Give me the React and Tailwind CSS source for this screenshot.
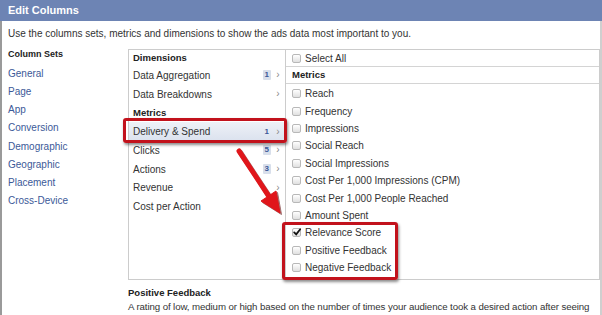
import React from 'react';

const columnSets = ['General', 'Page', 'App', 'Conversion', 'Demographic', 'Geographic', 'Placement', 'Cross-Device'];

const middleRows = [
    { label: 'Data Aggregation', badge: '1', arrow: true },
    { label: 'Data Breakdowns', arrow: true },
    { label: 'Metrics', heading: true },
    { label: 'Delivery & Spend', badge: '1', arrow: true, active: true },
    { label: 'Clicks', badge: '5', arrow: true },
    { label: 'Actions', badge: '3', arrow: true },
    { label: 'Revenue', arrow: true },
    { label: 'Cost per Action' },
];

const metrics = [
    { label: 'Reach' },
    { label: 'Frequency' },
    { label: 'Impressions' },
    { label: 'Social Reach' },
    { label: 'Social Impressions' },
    { label: 'Cost Per 1,000 Impressions (CPM)' },
    { label: 'Cost Per 1,000 People Reached' },
    { label: 'Amount Spent' },
    { label: 'Relevance Score', checked: true },
    { label: 'Positive Feedback' },
    { label: 'Negative Feedback' },
];

const Checkbox = ({ checked }) => (
    <span className="relative w-[9px] h-[9px] shrink-0 rounded-[2px] border border-[#b8b8b8] bg-gradient-to-b from-white to-[#e0e0e0]">
        {checked && (
            <svg viewBox="0 0 10 10" className="absolute left-0 top-[-1px] w-[8px] h-[8px]">
                <path d="M1.5 5.5 L4 8 L9 1.5" fill="none" stroke="#111" strokeWidth="2.2" strokeLinecap="round" />
            </svg>
        )}
    </span>
);

const Chevron = () => <span className="w-[8px] text-center text-[10px] leading-[10px] text-[#8a8a8a]">›</span>;

export default function App() {
    return (
        <div className="relative w-[602px] h-[315px] overflow-hidden bg-white text-[#333] font-['Liberation_Sans',Arial,sans-serif]">
            {/* Header */}
            <div className="h-[21px] bg-[#6d84b4] pl-2 flex items-center text-white font-bold text-[11px]">
                Edit Columns
            </div>

            <div className="h-[294px] border-l-2 border-l-[#9a9a9a] border-r-2 border-r-[#cfcfcf]">
                <p className="pl-[6px] pt-[7px] text-[10px] leading-[12px] text-[#333]">
                    Use the columns sets, metrics and dimensions to show the ads data most important to you.
                </p>

                <div className="flex mt-[6px]">
                    {/* Column sets */}
                    <div className="w-[126px] shrink-0 pl-[6px]">
                        <div className="h-[18.2px] flex items-center text-[9px] font-bold text-[#222]">Column Sets</div>
                        {columnSets.map((s) => (
                            <div key={s} className="h-[18.2px] flex items-center text-[10px] text-[#3b5998]">{s}</div>
                        ))}
                    </div>

                    <div className="flex-1 min-w-0 flex flex-col">
                        {/* Panels */}
                        <div className="mt-[3px] h-[231px] flex border border-[#cccccc]">
                            <div className="w-[157px] shrink-0 border-r border-[#cccccc]">
                                <div className="h-[16px] flex items-center pl-[4px] text-[9.5px] font-bold text-[#222]">Dimensions</div>
                                {middleRows.map((r) => (
                                    <div
                                        key={r.label}
                                        className={`h-[18.75px] flex items-center pl-[4px] pr-[3px] ${r.active ? 'bg-gradient-to-b from-[#eef1f7] to-[#dbe2ee]' : ''} ${r.heading ? 'font-bold text-[9.5px] text-[#222]' : 'text-[10px]'}`}
                                    >
                                        <span className="flex-1">{r.label}</span>
                                        {r.badge && (
                                            <span className={`mr-[3px] px-[2px] h-[10px] leading-[10px] text-[8px] font-bold text-[#3b5998] rounded-[1px] ${r.active ? '' : 'bg-[#d8dfeb]'}`}>
                                                {r.badge}
                                            </span>
                                        )}
                                        {r.arrow && <Chevron />}
                                    </div>
                                ))}
                            </div>

                            <div className="flex-1">
                                <div className="h-[17px] flex items-center gap-[4px] pl-[6px] border-b border-[#d4d4d4] text-[10px]">
                                    <Checkbox />
                                    <span>Select All</span>
                                </div>
                                <div className="h-[17px] flex items-center pl-[6px] border-b border-[#d4d4d4] text-[9.5px] font-bold text-[#222]">
                                    Metrics
                                </div>
                                <div className="pt-[1px]">
                                    {metrics.map((m) => (
                                        <div key={m.label} className="h-[17.4px] flex items-center gap-[4px] pl-[6px] text-[10px]">
                                            <Checkbox checked={m.checked} />
                                            <span>{m.label}</span>
                                        </div>
                                    ))}
                                </div>
                            </div>
                        </div>

                        {/* Explanation */}
                        <div className="mt-[7px] text-[9.5px] leading-[12px] font-bold text-[#222]">Positive Feedback</div>
                        <div className="mt-[1px] text-[9.7px] leading-[14px] tracking-[-0.1px] whitespace-nowrap text-[#333]">
                            <div>A rating of low, medium or high based on the number of times your audience took a desired action after seeing</div>
                            <div>your ad. This includes whether they engaged with the ad, such as shared or liked it, or helped you achieve</div>
                        </div>
                    </div>
                </div>
            </div>

            {/* Annotation overlays */}
            <div className="absolute left-[123px] top-[118px] w-[164px] h-[25px] border-[3px] border-[#c2121c] rounded-[3px] shadow-[1px_2px_3px_rgba(0,0,0,0.45)]" />
            <div className="absolute left-[282px] top-[222px] w-[116px] h-[58px] border-[3px] border-[#c2121c] rounded-[3px] shadow-[1px_2px_3px_rgba(0,0,0,0.45)]" />
            <svg className="absolute left-0 top-0 pointer-events-none" width="602" height="315" viewBox="0 0 602 315">
                <g transform="translate(1.5,1.5)" fill="#5a0000" stroke="#5a0000" opacity="0.55">
                    <line x1="239" y1="151" x2="268" y2="195" strokeWidth="5" strokeLinecap="round" />
                    <polygon points="280,213 261,201 276,191" strokeWidth="1" />
                </g>
                <g fill="#e0161b" stroke="#e0161b">
                    <line x1="239" y1="151" x2="268" y2="195" strokeWidth="5" strokeLinecap="round" />
                    <polygon points="280,213 261,201 276,191" strokeWidth="1" strokeLinejoin="round" />
                </g>
            </svg>
        </div>
    );
}
